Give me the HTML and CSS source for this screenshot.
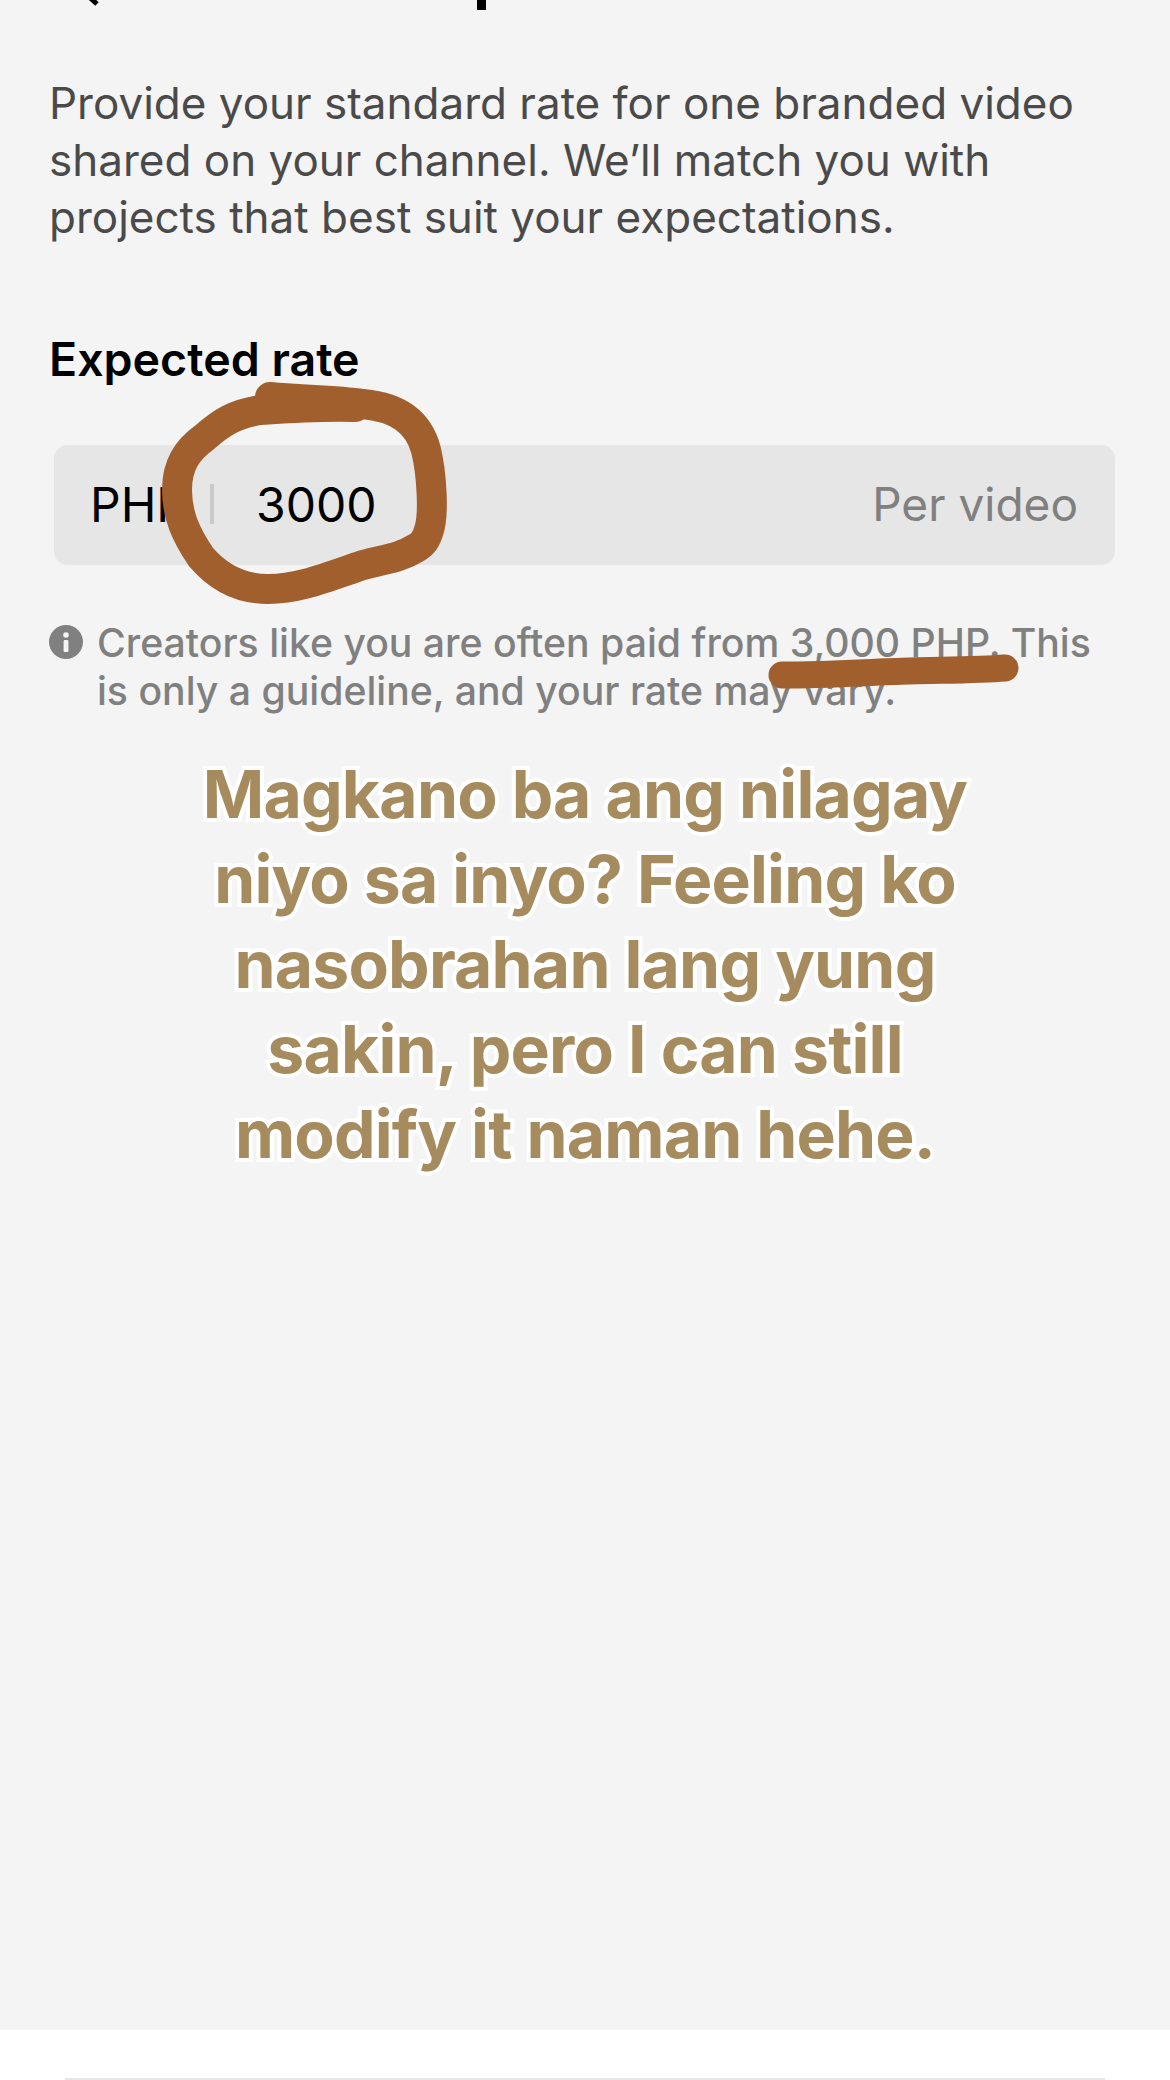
FILE: index.html
```html
<!DOCTYPE html>
<html lang="en">
<head>
<meta charset="utf-8">
<title>Expected rate</title>
<link rel="stylesheet" href="styles.css">
</head>
<body>
<div class="screen">
  <header class="topbar">
    <svg class="back" width="24" height="10" viewBox="0 0 24 10"><path d="M4 -6 L15 4" fill="none" stroke="#000" stroke-width="5"/></svg>
    <span class="stem"></span>
  </header>
  <main class="content">
    <p class="intro">Provide your standard rate for one branded video shared on your channel. We’ll match you with projects that best suit your expectations.</p>
    <h2 class="label">Expected rate</h2>
    <div class="field">
      <span class="currency">PHP</span>
      <span class="sep"></span>
      <span class="amount">3000</span>
      <span class="unit">Per video</span>
    </div>
    <div class="hint">
      <svg class="info" width="34" height="34" viewBox="0 0 34 34"><circle cx="17" cy="17" r="17" fill="#808080"/><circle cx="17" cy="10" r="2.8" fill="#f4f4f4"/><rect x="14.6" y="15" width="4.8" height="12" rx="1" fill="#f4f4f4"/></svg>
      <p class="hint-text">Creators like you are often paid from 3,000 PHP. This is only a guideline, and your rate may vary.</p>
    </div>
    <p class="sticker">Magkano ba ang nilagay<br>niyo sa inyo? Feeling ko<br>nasobrahan lang yung<br>sakin, pero I can still<br>modify it naman hehe.</p>
  </main>
  <footer class="footer"><div class="button-edge"></div></footer>
  <svg class="scribble" width="1170" height="720" viewBox="0 0 1170 720" fill="none" stroke="#a05f2c" stroke-linecap="round" stroke-linejoin="round">
    <path stroke-width="30" d="M270 397 C300 400 335 400 363 404 C395 407 418 420 426 450 C432 475 434 515 429 530 C426 540 423 544 416 548 C400 558 385 559 363 565 C330 576 300 589 268 589 C240 589 218 577 201 557 C186 535 177 515 177 490 C177 465 187 450 205 437 C222 422 235 414 260 410 C290 408 325 406 355 407"/>
    <path stroke-width="27" d="M782 675 C830 675 870 672 910 671 C950 670 980 670 1005 668"/>
  </svg>
</div>
</body>
</html>
```
FILE: styles.css
```css
* { box-sizing: border-box; }
html, body { margin: 0; padding: 0; }
body { width: 1170px; height: 2080px; overflow: hidden; background: #f4f4f4; font-family: Inter, "Liberation Sans", sans-serif; }
.screen { position: relative; width: 1170px; height: 2080px; display: flex; flex-direction: column; }
.topbar { height: 10px; position: relative; flex: none; overflow: hidden; }
.back { position: absolute; left: 82px; top: 0; }
.stem { position: absolute; left: 477px; top: 0; width: 9px; height: 10px; background: #000; }
.content { flex: 1; padding: 0 50px 0 49px; position: relative; }
.intro { margin: 65px 0 0; font-size: 44px; line-height: 57px; color: #4a4a4a; }
.label { margin: 87px 0 0; font-size: 46.5px; line-height: 52px; font-weight: 600; color: #000; }
.field { margin: 60px 0 0 5px; width: 1061px; height: 120px; background: #e6e6e6; border-radius: 14px; padding: 0 37px 2px 36px; display: flex; align-items: center; }
.currency { font-size: 48px; color: #000; width: 120px; flex: none; }
.sep { width: 4px; height: 40px; background: #c9c9c9; flex: none; }
.amount { margin-left: 42px; font-size: 48px; color: #000; }
.unit { margin-left: auto; font-size: 46px; color: #808080; }
.hint { margin-top: 54px; display: flex; gap: 14px; align-items: flex-start; }
.info { flex: none; margin-top: 6px; }
.hint-text { margin: 0; font-size: 39.2px; line-height: 48px; font-weight: 500; color: #808080; }
.sticker { position: absolute; left: 0; right: 0; top: 742px; margin: 0; text-align: center; font-family: Inter, "Liberation Sans", sans-serif; font-weight: 700; font-size: 66px; letter-spacing: -0.8px; line-height: 85px; color: #a58b5e; -webkit-text-stroke: 8px #fff; paint-order: stroke fill; }
.footer { flex: none; height: 50px; background: #fff; padding: 48px 65px 0; }
.button-edge { height: 2px; background: #e6e6e6; }
.scribble { position: absolute; left: 0; top: 0; pointer-events: none; }
```
